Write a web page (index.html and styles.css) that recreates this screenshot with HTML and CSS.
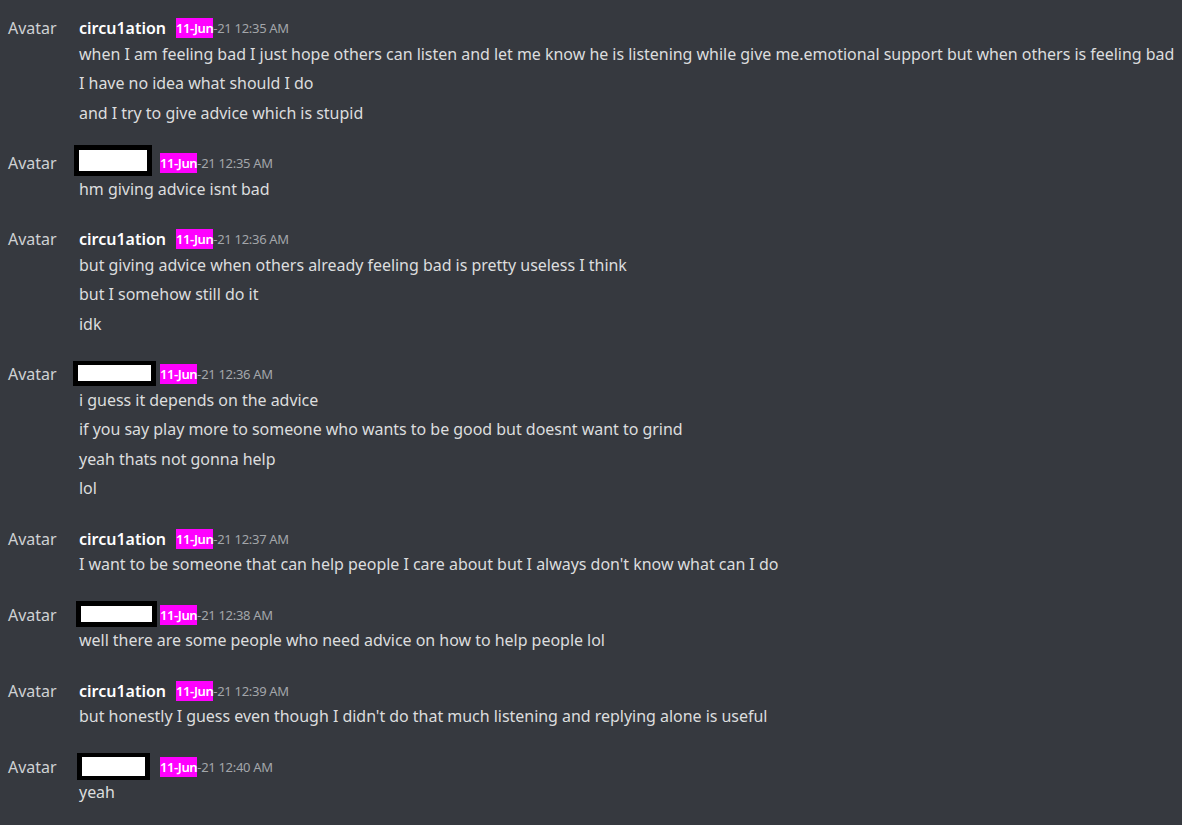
FILE: index.html
```html
<!DOCTYPE html>
<html lang="en">
<head>
  <meta charset="UTF-8">
  <title>Chat log</title>
  <link rel="stylesheet" href="styles.css">
</head>
<body>
  <main class="log">

    <article class="msg">
      <div class="msg__avatar">Avatar</div>
      <div class="msg__body">
        <header class="msg__head">
          <span class="msg__name">circu1ation</span>
          <span class="msg__time"><mark>11-Jun</mark>-21 12:35 AM</span>
        </header>
        <p>when I am feeling bad I just hope others can listen and let me know he is listening while give me.emotional support but when others is feeling bad</p>
        <p>I have no idea what should I do</p>
        <p>and I try to give advice which is stupid</p>
      </div>
    </article>

    <article class="msg">
      <div class="msg__avatar">Avatar</div>
      <div class="msg__body">
        <header class="msg__head">
          <span class="msg__name msg__name--hidden"><span class="redact redact--a"></span></span>
          <span class="msg__time"><mark>11-Jun</mark>-21 12:35 AM</span>
        </header>
        <p>hm giving advice isnt bad</p>
      </div>
    </article>

    <article class="msg">
      <div class="msg__avatar">Avatar</div>
      <div class="msg__body">
        <header class="msg__head">
          <span class="msg__name">circu1ation</span>
          <span class="msg__time"><mark>11-Jun</mark>-21 12:36 AM</span>
        </header>
        <p>but giving advice when others already feeling bad is pretty useless I think</p>
        <p>but I somehow still do it</p>
        <p>idk</p>
      </div>
    </article>

    <article class="msg">
      <div class="msg__avatar">Avatar</div>
      <div class="msg__body">
        <header class="msg__head">
          <span class="msg__name msg__name--hidden"><span class="redact redact--b"></span></span>
          <span class="msg__time"><mark>11-Jun</mark>-21 12:36 AM</span>
        </header>
        <p>i guess it depends on the advice</p>
        <p>if you say play more to someone who wants to be good but doesnt want to grind</p>
        <p>yeah thats not gonna help</p>
        <p>lol</p>
      </div>
    </article>

    <article class="msg">
      <div class="msg__avatar">Avatar</div>
      <div class="msg__body">
        <header class="msg__head">
          <span class="msg__name">circu1ation</span>
          <span class="msg__time"><mark>11-Jun</mark>-21 12:37 AM</span>
        </header>
        <p>I want to be someone that can help people I care about but I always don't know what can I do</p>
      </div>
    </article>

    <article class="msg">
      <div class="msg__avatar">Avatar</div>
      <div class="msg__body">
        <header class="msg__head">
          <span class="msg__name msg__name--hidden"><span class="redact redact--c"></span></span>
          <span class="msg__time"><mark>11-Jun</mark>-21 12:38 AM</span>
        </header>
        <p>well there are some people who need advice on how to help people lol</p>
      </div>
    </article>

    <article class="msg">
      <div class="msg__avatar">Avatar</div>
      <div class="msg__body">
        <header class="msg__head">
          <span class="msg__name">circu1ation</span>
          <span class="msg__time"><mark>11-Jun</mark>-21 12:39 AM</span>
        </header>
        <p>but honestly I guess even though I didn't do that much listening and replying alone is useful</p>
      </div>
    </article>

    <article class="msg">
      <div class="msg__avatar">Avatar</div>
      <div class="msg__body">
        <header class="msg__head">
          <span class="msg__name msg__name--hidden"><span class="redact redact--d"></span></span>
          <span class="msg__time"><mark>11-Jun</mark>-21 12:40 AM</span>
        </header>
        <p>yeah</p>
      </div>
    </article>

  </main>
  <div class="bottom-bar"></div>
</body>
</html>
```

FILE: styles.css
```css
* {
  box-sizing: border-box;
  margin: 0;
  padding: 0;
}

:root {
  --bg: #36393f;
  --bg-dark: #202225;
  --text: #dcddde;
  --muted: #a3a6aa;
  --highlight: #ff00ff;
}

html, body {
  height: 100%;
}

body {
  background: var(--bg);
  color: var(--text);
  font-family: "Noto Sans", "Open Sans", sans-serif;
  font-size: 16px;
  overflow: hidden;
  display: flex;
  flex-direction: column;
}

.log {
  flex: 1;
  padding-top: 17px;
}

/* Message group */

.msg {
  display: grid;
  grid-template-columns: 79px 1fr;
  padding-bottom: 24px;
}

.msg__avatar {
  padding-left: 8px;
  line-height: 22.5px;
  color: #cfd1d4;
  font-size: 16px;
}

.msg__head {
  height: 22.5px;
  line-height: 22.5px;
  display: flex;
  align-items: center;
  white-space: nowrap;
}

.msg__name {
  color: #fff;
  font-weight: 600;
  font-size: 16px;
}

.msg__name--hidden {
  position: relative;
  display: inline-block;
  width: 71px;
  height: 22px;
}

.msg__time {
  display: flex;
  align-items: center;
  margin-left: 10px;
  color: var(--muted);
  font-size: 13px;
  letter-spacing: -0.3px;
}

.msg__time mark {
  display: inline-block;
  height: 20px;
  line-height: 20px;
  background: var(--highlight);
  color: #fff;
  font-size: 13px;
  font-weight: 600;
  letter-spacing: -0.4px;
}

.msg__body p {
  line-height: 29.5px;
  white-space: nowrap;
  letter-spacing: -0.03px;
}

/* Redaction boxes drawn over the hidden names */

.redact {
  position: absolute;
  background: #fff;
  border: 5px solid #000;
}
.redact--a { left: -5px; top: -7px; width: 78px; height: 31px; }
.redact--b { left: -6px; top: -2px; width: 83px; height: 25px; border-width: 4px 5px 5px; }
.redact--c { left: -3px; top: -3px; width: 81px; height: 26px; }
.redact--d { left: -2px; top: -3px; width: 73px; height: 27px; border-width: 4px 5px; }

.bottom-bar {
  height: 3px;
  background: var(--bg-dark);
}
```
